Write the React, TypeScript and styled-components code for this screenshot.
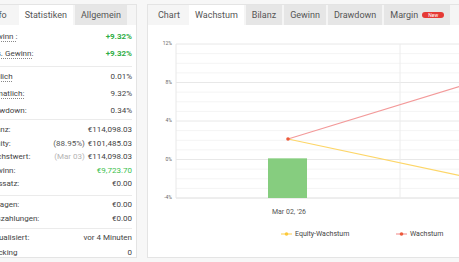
import styled, { createGlobalStyle } from 'styled-components';

const GlobalStyle = createGlobalStyle`
  html, body {
    margin: 0;
    padding: 0;
    background: #f7f7f7;
    overflow: hidden;
  }
  body {
    font-family: Roboto, "Liberation Sans", Arial, sans-serif;
  }
  * {
    box-sizing: border-box;
  }
`;

const Page = styled.div`
  display: flex;
  gap: 10px;
  width: 620px;
  height: 262px;
  padding: 4px 0 4px;
  margin-left: -24px;
`;

const Card = styled.div<{ $w: number }>`
  flex: none;
  width: ${p => p.$w}px;
  background: #fff;
  border: 1px solid #e4e4e4;
  display: flex;
  flex-direction: column;
  overflow: hidden;
`;

const TabStrip = styled.div<{ $pl: number }>`
  flex: none;
  display: flex;
  gap: 2px;
  height: 20px;
  padding-left: ${p => p.$pl}px;
  background: #f5f5f5;
`;

const Tab = styled.div<{ $active?: boolean; $plain?: boolean; $pr?: number }>`
  display: flex;
  align-items: center;
  gap: 4px;
  padding: 0 ${p => p.$pr ?? 6}px 0 6px;
  font-size: 9px;
  color: #555;
  white-space: nowrap;
  background: ${p => (p.$active ? '#fff' : p.$plain ? 'transparent' : '#e6e6e6')};
`;

const NewBadge = styled.span`
  display: inline-flex;
  align-items: center;
  justify-content: center;
  width: 22px;
  height: 6px;
  border-radius: 3px;
  background: #e53935;
  color: #fff;
  font-size: 5px;
  line-height: 1;
`;

const StatsBody = styled.div`
  padding: 0 4px 0 10px;
`;

const Group = styled.div<{ $pt: number; $pb: number }>`
  padding: ${p => p.$pt}px 0 ${p => p.$pb}px;
  border-bottom: 1px solid #ebebeb;

  &:last-child {
    border-bottom: none;
  }
`;

const Row = styled.div<{ $h: number }>`
  display: flex;
  justify-content: space-between;
  align-items: center;
  height: ${p => p.$h}px;
  font-size: 8px;
  color: #444;
  white-space: nowrap;
`;

const Label = styled.span<{ $tip?: boolean }>`
  text-decoration: ${p => (p.$tip ? 'underline dotted #888' : 'none')};
  text-underline-offset: 2px;
`;

const Value = styled.span<{ $tone?: 'gain' | 'profit' }>`
  color: ${p => (p.$tone === 'gain' ? '#2fae45' : p.$tone === 'profit' ? '#3cbf4e' : '#444')};
  font-weight: ${p => (p.$tone === 'gain' ? 700 : 400)};
`;

const Note = styled.span<{ $muted?: boolean }>`
  color: ${p => (p.$muted ? '#b4b4b4' : '#555')};
  margin-right: 3px;
`;

const ChartBody = styled.div`
  flex: 1;
`;

type Stat = { label: string; value: string; tip?: boolean; tone?: 'gain' | 'profit'; note?: string; muted?: boolean };
type StatGroup = { h: number; pt: number; pb: number; rows: Stat[] };

const groups: StatGroup[] = [
  {
    h: 17, pt: 2.5, pb: 4.5,
    rows: [
      { label: 'Gewinn :', value: '+9.32%', tip: true, tone: 'gain' },
      { label: 'Abs. Gewinn:', value: '+9.32%', tip: true, tone: 'gain' },
    ],
  },
  {
    h: 17, pt: 0.5, pb: 0.5,
    rows: [
      { label: 'Täglich', value: '0.01%', tip: true },
      { label: 'Monatlich:', value: '9.32%', tip: true },
      { label: 'Drawdown:', value: '0.34%' },
    ],
  },
  {
    h: 13.5, pt: 3, pb: 4.5,
    rows: [
      { label: 'Bilanz:', value: '€114,098.03' },
      { label: 'Equity:', value: '€101,485.03', note: '(88.95%)' },
      { label: 'Höchstwert:', value: '€114,098.03', note: '(Mar 03)', muted: true },
      { label: 'Gewinn:', value: '€9,723.70', tone: 'profit' },
      { label: 'Zinssatz:', value: '€0.00' },
    ],
  },
  {
    h: 14, pt: 1, pb: 3,
    rows: [
      { label: 'Einlagen:', value: '€0.00' },
      { label: 'Auszahlungen:', value: '€0.00' },
    ],
  },
  {
    h: 15, pt: 1, pb: 0,
    rows: [
      { label: 'Aktualisiert:', value: 'vor 4 Minuten' },
      { label: 'Tracking', value: '0' },
    ],
  },
];

// chart geometry (svg coords)
const plotLeft = 28;
const plotRight = 420;
const yOf = (p: number) => 134.5 - 9.625 * p;
const x0 = 140;
const x1 = 366;

function GrowthChart() {
  const minor: number[] = [];
  for (let p = -4; p <= 12; p++) if (p % 4 !== 0) minor.push(p);
  const major = [12, 8, 4, 0, -4];
  return (
    <svg width="420" height="232" style={{ display: 'block' }}>
      {minor.map(p => (
        <line key={p} x1={plotLeft} x2={plotRight} y1={yOf(p)} y2={yOf(p)} stroke="#f4f4f4" strokeWidth="1" />
      ))}
      {major.map(p => (
        <g key={p}>
          <line x1={plotLeft} x2={plotRight} y1={yOf(p)} y2={yOf(p)} stroke={p === -4 ? '#dcdcdc' : '#e8e8e8'} strokeWidth="1" />
          <text x={24} y={yOf(p)} textAnchor="end" dominantBaseline="middle" fontSize="5" fill="#666">
            {p}%
          </text>
        </g>
      ))}
      <line x1={plotLeft} x2={plotLeft} y1={yOf(12)} y2={yOf(-4)} stroke="#e8e8e8" strokeWidth="1" />
      <line x1={252} x2={252} y1={yOf(12)} y2={yOf(-4)} stroke="#ececec" strokeWidth="1" />

      <rect x={120} y={yOf(0.12)} width={39} height={yOf(-4) - yOf(0.12)} fill="#86cd7f" />

      <line x1={x0} y1={yOf(2.13)} x2={x1} y2={yOf(-2.85)} stroke="#fdd668" strokeWidth="1.2" />
      <line x1={x0} y1={yOf(2.13)} x2={x1} y2={yOf(9.32)} stroke="#f39a9a" strokeWidth="1.2" />
      <circle cx={x0} cy={yOf(2.13)} r="1.8" fill="#ec5a3c" />

      <text x={x0 + 1} y={187} textAnchor="middle" dominantBaseline="middle" fontSize="7" fill="#555">
        Mar 02, '26
      </text>

      <line x1={133} x2={144} y1={209} y2={209} stroke="#fdd668" strokeWidth="1.2" />
      <circle cx={138.5} cy={209} r="1.8" fill="#fcc93a" />
      <text x={147} y={209} dominantBaseline="middle" fontSize="7" fill="#444">
        Equity-Wachstum
      </text>
      <line x1={248} x2={259} y1={209} y2={209} stroke="#f39a9a" strokeWidth="1.2" />
      <circle cx={253.5} cy={209} r="1.8" fill="#ec5a3c" />
      <text x={262} y={209} dominantBaseline="middle" fontSize="7" fill="#444">
        Wachstum
      </text>
    </svg>
  );
}

export default function App() {
  return (
    <>
      <GlobalStyle />
      <Page>
        <Card $w={161}>
          <TabStrip $pl={8}>
            <Tab $plain $pr={10}>Info</Tab>
            <Tab $active>Statistiken</Tab>
            <Tab>Allgemein</Tab>
          </TabStrip>
          <StatsBody>
            {groups.map((g, i) => (
              <Group key={i} $pt={g.pt} $pb={g.pb}>
                {g.rows.map(r => (
                  <Row key={r.label} $h={g.h}>
                    <Label $tip={r.tip}>{r.label}</Label>
                    <Value $tone={r.tone}>
                      {r.note && <Note $muted={r.muted}>{r.note}</Note>}
                      {r.value}
                    </Value>
                  </Row>
                ))}
              </Group>
            ))}
          </StatsBody>
        </Card>

        <Card $w={430}>
          <TabStrip $pl={4}>
            <Tab $plain $pr={7}>Chart</Tab>
            <Tab $active>Wachstum</Tab>
            <Tab>Bilanz</Tab>
            <Tab>Gewinn</Tab>
            <Tab>Drawdown</Tab>
            <Tab>
              Margin <NewBadge>New</NewBadge>
            </Tab>
          </TabStrip>
          <ChartBody>
            <GrowthChart />
          </ChartBody>
        </Card>
      </Page>
    </>
  );
}
